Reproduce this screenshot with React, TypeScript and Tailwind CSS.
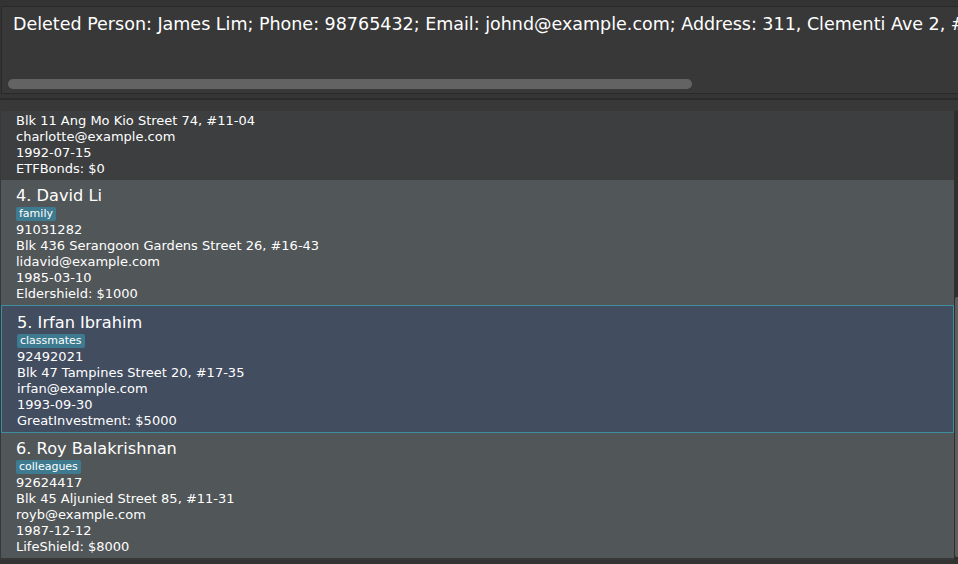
type Person = {
  id: number;
  name: string;
  tags: string[];
  phone: string;
  address: string;
  email: string;
  birthday: string;
  policy: string;
};

const persons: Person[] = [
  {
    id: 3,
    name: 'Charlotte Oliveiro',
    tags: ['neighbours'],
    phone: '93210283',
    address: 'Blk 11 Ang Mo Kio Street 74, #11-04',
    email: 'charlotte@example.com',
    birthday: '1992-07-15',
    policy: 'ETFBonds: $0',
  },
  {
    id: 4,
    name: 'David Li',
    tags: ['family'],
    phone: '91031282',
    address: 'Blk 436 Serangoon Gardens Street 26, #16-43',
    email: 'lidavid@example.com',
    birthday: '1985-03-10',
    policy: 'Eldershield: $1000',
  },
  {
    id: 5,
    name: 'Irfan Ibrahim',
    tags: ['classmates'],
    phone: '92492021',
    address: 'Blk 47 Tampines Street 20, #17-35',
    email: 'irfan@example.com',
    birthday: '1993-09-30',
    policy: 'GreatInvestment: $5000',
  },
  {
    id: 6,
    name: 'Roy Balakrishnan',
    tags: ['colleagues'],
    phone: '92624417',
    address: 'Blk 45 Aljunied Street 85, #11-31',
    email: 'royb@example.com',
    birthday: '1987-12-12',
    policy: 'LifeShield: $8000',
  },
];

const SELECTED = 5;

function PersonCard({ person, index }: { person: Person; index: number }) {
  const selected = person.id === SELECTED;
  const bg = selected
    ? 'bg-[#424d5f] border border-[#3e8ea0] pt-[6px]'
    : index % 2 === 0
      ? 'bg-[#3c3e3f] pt-[5px]'
      : 'bg-[#515658] pt-[5px]';

  return (
    <div className={`${bg} pl-[15px] pb-[3px] text-white`}>
      <div className="h-[22px] leading-[22px] text-[16.2px] whitespace-nowrap">
        {person.id}. {person.name}
      </div>
      <div className="h-[15px] flex items-start gap-1">
        {person.tags.map((t) => (
          <span
            key={t}
            className="bg-[#3e7b91] rounded-[2px] px-[3px] py-[1px] text-[11px] leading-[12px]"
          >
            {t}
          </span>
        ))}
      </div>
      <div className="text-[13px] leading-[16px] whitespace-nowrap">
        <div>{person.phone}</div>
        <div>{person.address}</div>
        <div>{person.email}</div>
        <div>{person.birthday}</div>
        <div>{person.policy}</div>
      </div>
    </div>
  );
}

export default function App() {
  return (
    <div
      className="w-[958px] h-[564px] overflow-hidden bg-[#333333] flex flex-col"
      style={{ fontFamily: '"DejaVu Sans", "Noto Sans", sans-serif' }}
    >
      {/* result display */}
      <div className="pt-[6px] pl-[1px]">
        <div className="h-[88px] w-[1000px] border border-[#2a2a2a] bg-[#383838] flex flex-col justify-between pb-[4px]">
          <div className="pt-[7px] pl-[11px] text-[17.5px] leading-[20px] text-white whitespace-nowrap overflow-hidden">
            Deleted Person: James Lim; Phone: 98765432; Email: johnd@example.com; Address: 311, Clementi Ave 2, #02-25; Tags: [friends][owesMoney]
          </div>
          <div className="pl-[6px]">
            <div className="h-[10px] w-[684px] rounded-full bg-[#636363]" />
          </div>
        </div>
      </div>

      {/* divider */}
      <div className="h-[4px] bg-[#353535]" />
      <div className="h-[2px] bg-[#2b2b2b]" />

      {/* person list */}
      <div className="flex-1 min-h-0 bg-[#383838] pt-[11px] flex flex-col">
        <div className="flex-1 min-h-0 flex">
          <div className="flex-1 min-w-0 overflow-hidden pl-[1px]">
            <div className="-mt-[56px]">
              {persons.map((p, i) => (
                <PersonCard key={p.id} person={p} index={i + 2} />
              ))}
            </div>
          </div>
          <div className="w-[4px] bg-[#2f2f2f] flex flex-col pt-[186px] pl-[1px] pb-[3px]">
            <div className="flex-1 bg-[#5d5d5d] rounded-tl-[2px] rounded-bl-[2px]" />
          </div>
        </div>
        <div className="h-[4px] bg-[#333333]" />
      </div>
    </div>
  );
}
